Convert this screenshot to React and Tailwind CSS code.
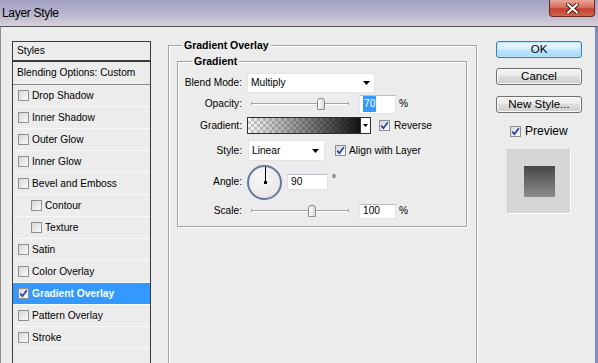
import React from 'react';

const styleItems = [
  { label: 'Drop Shadow' },
  { label: 'Inner Shadow' },
  { label: 'Outer Glow' },
  { label: 'Inner Glow' },
  { label: 'Bevel and Emboss' },
  { label: 'Contour', indent: true },
  { label: 'Texture', indent: true },
  { label: 'Satin' },
  { label: 'Color Overlay' },
  { label: 'Gradient Overlay', checked: true, active: true },
  { label: 'Pattern Overlay' },
  { label: 'Stroke' },
];

const Check = ({ checked }) => (
  <span className="flex h-[11px] w-[11px] shrink-0 items-center justify-center border border-[#8e8f8f] bg-[linear-gradient(135deg,#d6d6d6,#fbfbfb)]">
    {checked && (
      <svg width="9" height="9" viewBox="0 0 9 9">
        <path d="M1.3 4.6 L3.4 7.2 L7.8 1.2" fill="none" stroke="#23409a" strokeWidth="1.7" />
      </svg>
    )}
  </span>
);

const Arrow = () => (
  <svg width="7" height="4" viewBox="0 0 7 4">
    <path d="M0 0 H7 L3.5 4 Z" fill="#000" />
  </svg>
);

const Slider = ({ at }) => (
  <div className="relative h-[14px] w-[98px]">
    <div className="absolute left-0 right-0 top-[6px] h-[2px] border-t border-[#a4a4a4] bg-white" />
    <div className="absolute left-0 top-[5px] h-[3px] w-px bg-[#a4a4a4]" />
    <div className="absolute right-0 top-[5px] h-[3px] w-px bg-[#a4a4a4]" />
    <div
      className="absolute top-[1px] h-[12px] w-[8px] rounded-t-[3px] rounded-b-[1px] border border-[#8a8a8a] bg-[linear-gradient(to_right,#fdfdfd,#d9d9d9)]"
      style={{ left: at }}
    />
  </div>
);

const Field = ({ value, selected, className = '' }) => (
  <div className={`flex items-center border border-[#dfe3e8] border-t-[#b9bcc2] bg-white pl-[3px] ${className}`}>
    {selected ? <span className="bg-[#3399ff] px-[1px] text-white">{value}</span> : <span>{value}</span>}
  </div>
);

const Button = ({ children, primary }) => (
  <div
    className={`flex h-[17px] w-[86px] items-center justify-center rounded-[3px] border text-[11.5px] ${
      primary
        ? 'border-[#3c7fb1] bg-[linear-gradient(to_bottom,#eaf6fd_0%,#d9f0fc_45%,#bee6fd_50%,#a7d9f5_100%)] shadow-[inset_0_0_0_1px_#b6e4ff]'
        : 'border-[#707070] bg-[linear-gradient(to_bottom,#f2f2f2_0%,#ebebeb_45%,#dddddd_50%,#cfcfcf_100%)] shadow-[inset_0_0_0_1px_#fbfbfb]'
    }`}
  >
    {children}
  </div>
);

export default function App() {
  return (
    <div className="flex h-[363px] w-[598px] flex-col overflow-hidden bg-[#ececec] font-['Liberation_Sans',Arial,sans-serif] text-[10.2px] text-black">
      {/* title bar */}
      <div className="relative flex h-[26px] shrink-0 items-center bg-[linear-gradient(to_bottom,#a3a1c3_0%,#b9b5cc_55%,#d8d1da_100%)] pl-[2px]">
        <span className="text-[12px] tracking-[-0.3px] text-black">Layer Style</span>
        <div className="absolute right-[3px] top-0 flex h-[17px] w-[46px] items-center justify-center rounded-b-[4px] border border-t-0 border-[#6b2a22] bg-[linear-gradient(to_bottom,#e9a394_0%,#d77160_45%,#c2402b_55%,#d2664f_100%)]">
          <svg width="13" height="11" viewBox="0 0 13 11">
            <path d="M2 1.5 L11 9.5 M11 1.5 L2 9.5" stroke="#4a1d17" strokeWidth="4" strokeLinecap="square" />
            <path d="M2 1.5 L11 9.5 M11 1.5 L2 9.5" stroke="#fff" strokeWidth="2" strokeLinecap="square" />
          </svg>
        </div>
      </div>

      {/* body */}
      <div className="flex min-h-0 flex-1 border-l border-r-[3px] border-t border-l-[#8c8c8c] border-r-[#7d8fb5] border-t-[#4f4f4f]">
        {/* styles list */}
        <div className="ml-[11px] mt-[14px] w-[139px] shrink-0 self-start border border-[#3a3a3a]">
          <div className="flex h-[20px] items-center border-b-2 border-[#3a3a3a] pl-[4px]">Styles</div>
          <div className="flex h-[23px] items-center border-b border-[#8a8a8a] pl-[4px]">Blending Options: Custom</div>
          {styleItems.map((item) => (
            <div
              key={item.label}
              className={`flex h-[22px] items-center border-b border-[#f9f9f9] ${item.indent ? 'pl-[18px]' : 'pl-[5px]'} ${
                item.active ? 'bg-[#3399ff] font-bold text-white' : ''
              }`}
            >
              <Check checked={item.checked} />
              <span className="ml-[3px]">{item.label}</span>
            </div>
          ))}
          <div className="h-[30px]" />
        </div>

        {/* gradient overlay group */}
        <div className="relative ml-[17px] mt-[18px] h-[340px] w-[309px] shrink-0 border border-[#a3a3a3] shadow-[inset_1px_1px_0_#fff,1px_1px_0_#fff]">
          <span className="absolute -top-[7px] left-[13px] bg-[#ececec] px-[2px] text-[10.5px] font-bold leading-[13px]">Gradient Overlay</span>

          <div className="relative ml-[8px] mt-[15px] w-[290px] border border-[#a3a3a3] pb-[7px] pt-[11px] shadow-[inset_1px_1px_0_#fff,1px_1px_0_#fff]">
            <span className="absolute -top-[7px] left-[14px] bg-[#ececec] px-[2px] text-[10.5px] font-bold leading-[13px]">Gradient</span>

            <div className="flex h-[20px] items-center">
              <span className="w-[64px] text-right">Blend Mode:</span>
              <div className="ml-[5px] flex h-[20px] w-[128px] items-center justify-between border border-[#e4e4e4] bg-white pl-[3px] pr-[4px]">
                <span>Multiply</span>
                <Arrow />
              </div>
            </div>

            <div className="mt-[1px] flex h-[20px] items-center">
              <span className="w-[64px] text-right">Opacity:</span>
              <div className="ml-[9px]">
                <Slider at={66} />
              </div>
              <Field value="70" selected className="ml-[10px] h-[19px] w-[37px]" />
              <span className="ml-[3px]">%</span>
            </div>

            <div className="mt-[2px] flex h-[19px] items-center">
              <span className="w-[64px] text-right">Gradient:</span>
              <div className="ml-[5px] flex h-[17px] items-stretch border border-[#2e2e2e]">
                <div className="w-[112px] bg-[linear-gradient(to_right,rgba(0,0,0,0.02),rgba(0,0,0,0.92)),repeating-conic-gradient(#cfcfcf_0_25%,#ffffff_0_50%)] bg-[length:100%_100%,6px_6px]" />
                <div className="flex w-[10px] items-center justify-center border-l border-[#2e2e2e] bg-white">
                  <svg width="5" height="3" viewBox="0 0 5 3">
                    <path d="M0 0 H5 L2.5 3 Z" fill="#000" />
                  </svg>
                </div>
              </div>
              <div className="ml-[8px]">
                <Check checked />
              </div>
              <span className="ml-[4px]">Reverse</span>
            </div>

            <div className="mt-[5px] flex h-[21px] items-center">
              <span className="w-[64px] text-right">Style:</span>
              <div className="ml-[6px] flex h-[21px] w-[77px] items-center justify-between border border-[#e4e4e4] bg-white pl-[3px] pr-[5px]">
                <span>Linear</span>
                <Arrow />
              </div>
              <div className="ml-[10px]">
                <Check checked />
              </div>
              <span className="ml-[3px]">Align with Layer</span>
            </div>

            <div className="mt-[3px] flex h-[36px] items-center">
              <span className="w-[64px] text-right">Angle:</span>
              <div className="relative ml-[5px] h-[35px] w-[35px] rounded-full border-2 border-[#66779a] bg-[radial-gradient(circle_at_40%_35%,#f8f8f8,#e2e2e2)]">
                <div className="absolute left-[15.5px] top-0 h-[16px] w-px bg-black" />
                <div className="absolute left-[14.5px] top-[14.5px] h-[3px] w-[3px] bg-black" />
              </div>
              <Field value="90" className="ml-[5px] h-[16px] w-[41px]" />
              <span className="mb-[7px] ml-[4px]">°</span>
            </div>

            <div className="mt-[3px] flex h-[16px] items-center">
              <span className="w-[64px] text-right">Scale:</span>
              <div className="ml-[9px]">
                <Slider at={57} />
              </div>
              <Field value="100" className="ml-[10px] h-[15px] w-[37px]" />
              <span className="ml-[3px]">%</span>
            </div>
          </div>
        </div>

        {/* buttons + preview */}
        <div className="ml-[19px] mt-[14px] flex w-[86px] shrink-0 flex-col items-center">
          <Button primary>OK</Button>
          <div className="mt-[10px]">
            <Button>Cancel</Button>
          </div>
          <div className="mt-[11px]">
            <Button>New Style...</Button>
          </div>
          <div className="mt-[9px] flex items-center self-start pl-[14px]">
            <Check checked />
            <span className="ml-[4px] text-[12px]">Preview</span>
          </div>
          <div className="ml-[11px] mt-[9px] flex h-[65px] w-[64px] items-center justify-center self-start border border-[#cfcfcf] border-b-white border-r-white bg-[#d6d6d6]">
            <div className="h-[31px] w-[31px] bg-[linear-gradient(to_bottom,#474747,#8c8c8c)]" />
          </div>
        </div>
      </div>
    </div>
  );
}
